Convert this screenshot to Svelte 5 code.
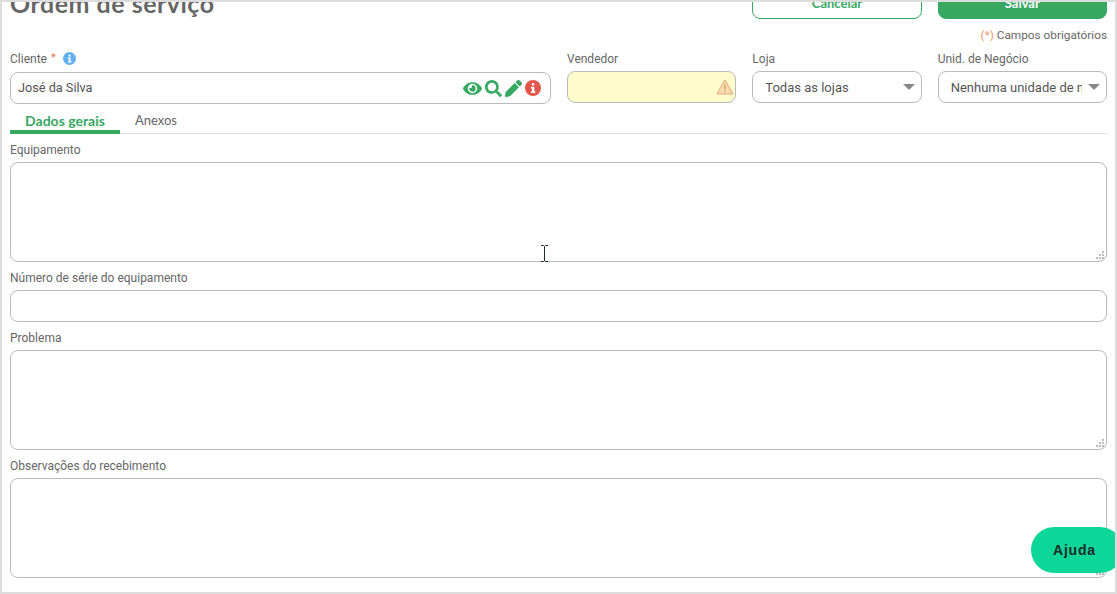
<script lang="ts">
	const notes = [
		{ label: 'Equipamento', kind: 'area' },
		{ label: 'Número de série do equipamento', kind: 'line' },
		{ label: 'Problema', kind: 'area' },
		{ label: 'Observações do recebimento', kind: 'area' }
	];
	const gripDots = [
		[6, 0],
		[3, 3],
		[6, 3],
		[0, 6],
		[3, 6],
		[6, 6]
	];
</script>

<div class="frame">
	<div class="page">
		<div class="cols head">
			<h1>Ordem de serviço</h1>
			<button class="btn btn-outline">Cancelar</button>
			<button class="btn btn-solid">Salvar</button>
		</div>
		<p class="required"><span class="star">(*)</span> Campos obrigatórios</p>

		<div class="cols">
			<div class="field client">
				<div class="label">
					Cliente <span class="star small">*</span>
					<svg class="hint" viewBox="0 0 14 14">
						<circle cx="7" cy="7" r="7" fill="#61aef0" />
						<rect x="6" y="2.8" width="2.2" height="2.2" rx="1" fill="#fff" />
						<path d="M5.2 6h3v4h1v1.2H5.2V10h1V7.2h-1z" fill="#fff" />
					</svg>
				</div>
				<div class="input client-input">
					<span>José da Silva</span>
					<div class="tools">
						<svg width="19" height="17" viewBox="0 0 576 512"><path fill="#37a862" d="M572.52 241.4C518.29 135.59 410.93 64 288 64S57.68 135.64 3.48 241.41a32.35 32.35 0 0 0 0 29.19C57.71 376.41 165.07 448 288 448s230.32-71.64 284.52-177.41a32.35 32.35 0 0 0 0-29.19zM288 400a144 144 0 1 1 144-144 143.93 143.93 0 0 1-144 144zm0-240a95.31 95.31 0 0 0-25.31 3.79 47.85 47.85 0 0 1-66.9 66.9A95.78 95.78 0 1 0 288 160z" /></svg>
						<svg width="17" height="17" viewBox="0 0 512 512"><path fill="#37a862" d="M505 442.7L405.3 343c-4.5-4.5-10.6-7-17-7H372c27.6-35.3 44-79.7 44-128C416 93.1 322.9 0 208 0S0 93.1 0 208s93.1 208 208 208c48.3 0 92.7-16.4 128-44v16.3c0 6.4 2.5 12.5 7 17l99.7 99.7c9.4 9.4 24.6 9.4 33.9 0l28.3-28.3c9.4-9.4 9.4-24.6.1-34zM208 336c-70.7 0-128-57.2-128-128 0-70.7 57.2-128 128-128 70.7 0 128 57.2 128 128 0 70.7-57.2 128-128 128z" /></svg>
						<svg width="17" height="17" viewBox="0 0 512 512"><path fill="#37a862" d="M497.9 142.1l-46.1 46.1c-4.7 4.7-12.3 4.7-17 0l-111-111c-4.7-4.7-4.7-12.3 0-17l46.1-46.1c18.7-18.7 49.1-18.7 67.9 0l60.1 60.1c18.8 18.7 18.8 49.1 0 67.9zM284.2 99.8L21.6 362.4.4 483.9c-2.9 16.4 11.4 30.6 27.8 27.8l121.5-21.3 262.6-262.6c4.7-4.7 4.7-12.3 0-17l-111-111c-4.8-4.7-12.4-4.7-17.1 0z" /></svg>
						<svg width="16" height="16" viewBox="0 0 16 16">
							<circle cx="8" cy="8" r="8" fill="#e2574c" />
							<rect x="6.8" y="3" width="2.5" height="2.5" rx="1.1" fill="#fff" />
							<path d="M6 6.700h3.300v4.600h1V13H6v-1.700h1V8.400H6z" fill="#fff" />
						</svg>
					</div>
				</div>
			</div>

			<div class="field">
				<div class="label">Vendedor</div>
				<div class="input warn">
					<svg width="18" height="16" viewBox="0 0 18 16">
						<path d="M9 1 L17 15 H1 Z" fill="#f8dcaa" stroke="#e8a57c" stroke-width="1" stroke-linejoin="round" />
						<rect x="8.3" y="5.5" width="1.4" height="5" fill="#d0a078" />
						<rect x="8.3" y="11.500" width="1.4" height="1.600" fill="#d0a078" />
					</svg>
				</div>
			</div>

			<div class="field">
				<div class="label">Loja</div>
				<div class="select-wrap">
					<select class="input"><option>Todas as lojas</option></select>
				</div>
			</div>

			<div class="field">
				<div class="label">Unid. de Negócio</div>
				<div class="select-wrap">
					<select class="input"><option>Nenhuma unidade de negócio</option></select>
				</div>
			</div>
		</div>

		<div class="tabs">
			<span class="tab active">Dados gerais</span>
			<span class="tab">Anexos</span>
		</div>

		<div class="notes">
			{#each notes as note}
				<div class="field">
					<div class="label">{note.label}</div>
					{#if note.kind === 'area'}
						<div class="area-wrap">
							<textarea class="input area"></textarea>
							<svg class="grip" width="8" height="8" viewBox="0 0 8 8">
								{#each gripDots as dot}
									<rect x={dot[0]} y={dot[1]} width="2" height="2" fill="#bdbdbd" />
								{/each}
							</svg>
						</div>
					{:else}
						<input class="input" type="text" />
					{/if}
				</div>
			{/each}
		</div>
	</div>

	<svg class="cursor" width="9" height="17" viewBox="0 0 9 17">
		<path d="M1 .5h2.500L4.500 1.500 5.500.5H8M4.500 1.500v14M1 16.500h2.500l1-1 1 1H8" fill="none" stroke="#1c2a2a" />
	</svg>
	<div class="help">Ajuda</div>
</div>

<style>
	:global(body) {
		background: #fff;
	}

	.frame {
		position: relative;
		box-sizing: border-box;
		height: 594px;
		border: 2px solid #ddd;
		overflow: hidden;
		background: #fff;
		font-family: Roboto, "Liberation Sans", sans-serif;
		font-size: 13px;
		color: #666;
	}

	.page {
		padding: 0 8px;
		margin-top: -15px;
	}

	.cols {
		display: grid;
		grid-template-columns: 541px 1fr 1fr 1fr;
		column-gap: 16px;
	}

	.head {
		height: 32px;
		align-items: center;
	}

	h1 {
		grid-column: 1 / 3;
		margin: 0;
		font-family: Lato, sans-serif;
		font-size: 25px;
		font-weight: 700;
		letter-spacing: 0.5px;
		color: #666;
	}

	.btn {
		height: 32px;
		border-radius: 8px;
		font-family: Lato, sans-serif;
		font-size: 13px;
		font-weight: 700;
	}

	.btn-outline {
		background: #fff;
		color: #37a862;
		border: 1px solid #37a862;
	}

	.btn-solid {
		background: #37a862;
		color: #fff;
		border: 1px solid #37a862;
	}

	.required {
		margin: 8px 0;
		height: 16px;
		line-height: 16px;
		font-size: 11.8px;
		text-align: right;
	}

	.star {
		color: #e59a6c;
	}

	.star.small {
		font-size: 11px;
		margin-top: -3px;
		color: #e0724c;
	}

	.label {
		display: flex;
		align-items: center;
		gap: 4px;
		height: 16px;
		line-height: 16px;
		margin-bottom: 4px;
		font-size: 12px;
		color: #666;
	}

	.client .label {
		margin-bottom: 5px;
	}

	.hint {
		width: 13px;
		height: 13px;
		margin-left: 3px;
		margin-top: -2px;
	}

	.input {
		display: block;
		box-sizing: border-box;
		width: 100%;
		height: 32px;
		padding: 0 12px;
		border: 1px solid #bbb;
		border-radius: 8px;
		background: #fff;
		font-family: Roboto, "Liberation Sans", sans-serif;
		font-size: 13px;
		color: #555;
		outline: none;
	}

	.client-input {
		display: flex;
		align-items: center;
		justify-content: space-between;
		padding: 0 9px 1px 7px;
		font-size: 12.7px;
	}

	.tools {
		display: flex;
		align-items: center;
		gap: 3px;
		margin-bottom: -1px;
	}

	.warn {
		display: flex;
		align-items: center;
		justify-content: flex-end;
		padding-right: 1px;
		background: #fffccc;
	}

	.select-wrap {
		position: relative;
	}

	.select-wrap select {
		appearance: none;
		padding-left: 12px;
		padding-right: 24px;
		text-overflow: clip;
	}

	.select-wrap::after {
		content: '';
		position: absolute;
		right: 7px;
		top: 13px;
		border-left: 6px solid transparent;
		border-right: 6px solid transparent;
		border-top: 6px solid #888;
		pointer-events: none;
	}

	.tabs {
		display: flex;
		height: 24px;
		margin-top: 6px;
		border-bottom: 1px solid #ddd;
		box-sizing: border-box;
	}

	.tab {
		width: 110px;
		height: 24px;
		box-sizing: border-box;
		text-align: center;
		line-height: 22px;
		font-size: 13px;
		color: #666;
		font-family: Lato, sans-serif;
	}

	.tab + .tab {
		width: auto;
		margin-left: 15px;
		line-height: 20px;
	}

	.tab.active {
		border-bottom: 4px solid #37a862;
		color: #37a862;
		font-size: 14px;
		font-weight: 700;
	}

	.notes {
		display: flex;
		flex-direction: column;
		gap: 8px;
		margin-top: 8px;
	}

	.area-wrap {
		position: relative;
	}

	.area {
		height: 100px;
		padding: 8px 12px;
		resize: none;
	}

	.grip {
		position: absolute;
		right: 3px;
		bottom: 3px;
	}

	.cursor {
		position: absolute;
		left: 538px;
		top: 243px;
	}

	.help {
		position: absolute;
		left: 1029px;
		top: 525px;
		width: 92px;
		height: 46px;
		border-radius: 23px;
		background: #0cd798;
		padding-left: 22px;
		box-sizing: border-box;
		line-height: 46px;
		font-family: "Liberation Sans", sans-serif;
		font-weight: 700;
		font-size: 14px;
		letter-spacing: 0.8px;
		color: #1d2b2b;
	}
</style>
